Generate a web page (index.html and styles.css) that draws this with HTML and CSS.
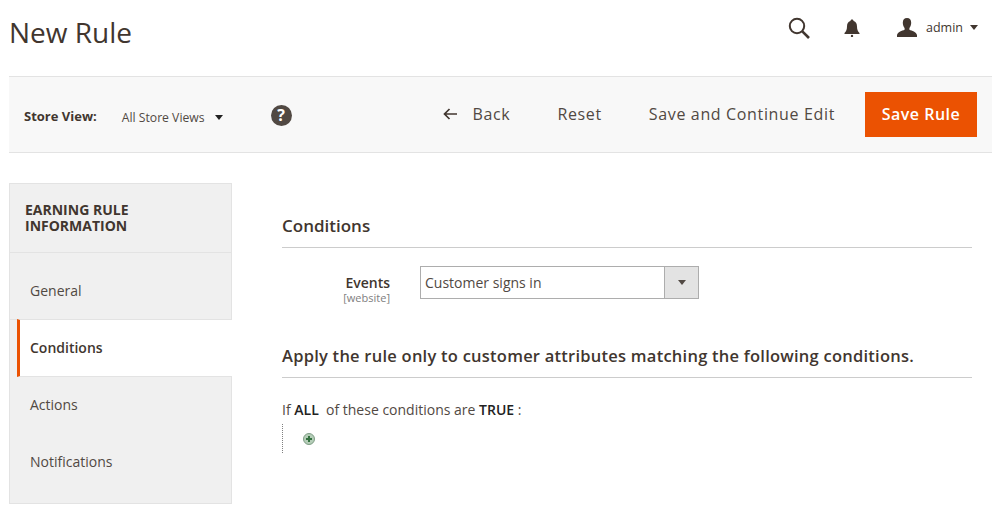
FILE: index.html
```html
<!DOCTYPE html>
<html>
<head>
    <title>New Rule</title>
    <meta name="viewport" content="width=device-width, initial-scale=1.0">
    <link rel="stylesheet" href="styles.css">
</head>
<body>
    <div class="page">
        <header class="top">
            <h1>New Rule</h1>
            <div class="top-actions">
                <svg class="icon-search" width="24" height="24" viewBox="0 0 24 24"><circle cx="10" cy="10" r="7.2" fill="none" stroke="#41362f" stroke-width="2"/><path d="M15.3 15.3L22 22" stroke="#41362f" stroke-width="2.6" fill="none"/></svg>
                <svg class="icon-bell" width="16" height="18" viewBox="0 0 16 18"><path d="M8 0.5c1 0 1.5.7 1.6 1.6C12 2.8 13 4.8 13 7.5c0 3 .8 5 2.500 6.500v1H.5v-1C2.200 12.500 3 10.500 3 7.500c0-2.700 1-4.700 3.400-5.400C6.500 1.200 7 .5 8 .5z" fill="#41362f"/><circle cx="8" cy="17" r="1.200" fill="#41362f"/></svg>
                <svg class="icon-user" width="20" height="20" viewBox="0 0 20 20"><path d="M10 0c2.800 0 4.200 2 4.200 4.800 0 2.200-.8 4-1.800 5.200v1.700c2.500 1.200 7 2 7.600 5.300v2H0v-2c.6-3.300 5.100-4.100 7.600-5.300V10c-1-1.200-1.800-3-1.800-5.200C5.800 2 7.200 0 10 0z" fill="#41362f"/></svg>
                <span class="user-name">admin</span>
                <span class="caret"></span>
            </div>
        </header>

        <div class="toolbar">
            <div class="scope">
                <strong>Store View:</strong>
                <span class="scope-value">All Store Views</span>
                <span class="caret caret-dark"></span>
                <span class="help">?</span>
            </div>
            <div class="buttons">
                <a class="tool-btn back">
                    <svg width="14" height="12" viewBox="0 0 14 12"><path d="M6.500 1L1.500 6l5 5M1.500 6H14" fill="none" stroke="#41362f" stroke-width="1.700"/></svg>
                    Back
                </a>
                <a class="tool-btn">Reset</a>
                <a class="tool-btn">Save and Continue Edit</a>
                <a class="save-btn">Save Rule</a>
            </div>
        </div>

        <div class="main">
            <aside class="side">
                <div class="side-title">EARNING RULE INFORMATION</div>
                <ul class="tabs">
                    <li class="tab tab-general">General</li>
                    <li class="tab tab-active">Conditions</li>
                    <li class="tab">Actions</li>
                    <li class="tab">Notifications</li>
                </ul>
            </aside>

            <section class="content">
                <h2 class="section-title">Conditions</h2>
                <div class="field">
                    <div class="field-label">
                        <label>Events</label>
                        <span>[website]</span>
                    </div>
                    <div class="select">
                        <span class="select-text">Customer signs in</span>
                        <span class="select-arrow"><span class="caret caret-small"></span></span>
                    </div>
                </div>
                <h2 class="section-title rule-title">Apply the rule only to customer attributes matching the following conditions.</h2>
                <p class="rule-line">If <b>ALL</b>&nbsp; of these conditions are <b>TRUE</b> :</p>
                <div class="rule-tree">
                    <svg width="12" height="12" viewBox="0 0 12 12"><circle cx="6" cy="6" r="5.500" fill="#b4cdb7" stroke="#7f9c85"/><path d="M6 3v6M3 6h6" stroke="#33703f" stroke-width="2"/></svg>
                </div>
            </section>
        </div>
    </div>
</body>
</html>
```

FILE: styles.css
```css
* {
    margin: 0;
    padding: 0;
    box-sizing: border-box;
}

body {
    font-family: "Open Sans", Arial, sans-serif;
    font-size: 14px;
    color: #41362f;
    background: #fff;
    height: 519px;
    overflow: hidden;
}

.page {
    width: 983px;
    margin-left: 9px;
}

.top {
    height: 76px;
    display: flex;
    align-items: center;
    justify-content: space-between;
}

.top h1 {
    font-size: 28px;
    font-weight: 400;
    line-height: 38px;
    color: #41362f;
    margin-top: -12px;
}

.top-actions {
    display: flex;
    align-items: center;
    margin-top: -21px;
    padding-right: 14px;
}

.icon-search {
    margin-right: 33px;
    margin-left: -1px;
}

.icon-bell {
    margin-right: 37px;
}

.user-name {
    font-size: 12.500px;
    margin: 0 7px 0 9px;
}

.caret {
    display: inline-block;
    width: 0;
    height: 0;
    border-left: 4.500px solid transparent;
    border-right: 4.500px solid transparent;
    border-top: 5px solid #41362f;
}

.toolbar {
    height: 77px;
    background: #f8f8f8;
    border-top: 1px solid #e3e3e3;
    border-bottom: 1px solid #e3e3e3;
    display: flex;
    align-items: center;
    justify-content: space-between;
    padding: 0 15px;
}

.scope {
    display: flex;
    align-items: center;
    font-size: 13px;
    padding-top: 2px;
}

.scope strong {
    color: #41362f;
    margin-right: 25px;
}

.scope-value {
    font-size: 12.200px;
    color: #514943;
    margin: 4px 10px 0 0;
}

.caret-dark {
    border-top-color: #222;
    margin-top: 3px;
}

.help {
    width: 21px;
    height: 21px;
    border-radius: 50%;
    background: #514943;
    color: #fff;
    font-weight: 700;
    font-size: 16px;
    line-height: 21px;
    text-align: center;
    margin-left: 48px;
    margin-top: -1px;
}

.buttons {
    display: flex;
    align-items: center;
}

.tool-btn {
    font-size: 16px;
    letter-spacing: .65px;
    color: #514943;
    margin: -2px 47px 0 0;
    display: flex;
    align-items: center;
}

.tool-btn:nth-child(3) {
    margin-right: 30px;
}

.back svg {
    margin-right: 15px;
}

.save-btn {
    width: 112px;
    height: 45px;
    background: #eb5202;
    color: #fff;
    font-size: 16px;
    font-weight: 600;
    letter-spacing: .5px;
    line-height: 45px;
    text-align: center;
}

.main {
    display: flex;
    padding-top: 30px;
}

.side {
    width: 223px;
    height: 321px;
    background: #f0f0f0;
    border: 1px solid #e3e3e3;
    flex-shrink: 0;
}

.side-title {
    height: 69px;
    padding: 18px 60px 0 15px;
    font-size: 14px;
    font-weight: 700;
    line-height: 16px;
    color: #41362f;
    border-bottom: 1px solid #e3e3e3;
}

.tabs {
    list-style: none;
}

.tab {
    height: 57px;
    padding: 0 0 2px 20px;
    display: flex;
    align-items: center;
    font-size: 14px;
    color: #514943;
}

.tab-general {
    height: 67px;
    padding-top: 8px;
    padding-bottom: 0;
    border-bottom: 1px solid #e3e3e3;
}

.tab-active {
    height: 58px;
    margin: -1px -1px 0 7px;
    padding: 0 0 2px 10px;
    background: #fff;
    border-left: 3px solid #eb5202;
    border-top: 1px solid #e3e3e3;
    border-bottom: 1px solid #e3e3e3;
    color: #41362f;
    font-weight: 600;
}

.content {
    width: 690px;
    margin-left: 50px;
    padding-top: 31px;
}

.section-title {
    font-size: 17px;
    font-weight: 600;
    line-height: 23px;
    color: #41362f;
    padding-bottom: 10px;
    border-bottom: 1px solid #ccc;
}

.field {
    display: flex;
    margin-top: 18px;
}

.field-label {
    width: 108px;
    text-align: right;
    padding-top: 9px;
    line-height: 16px;
}

.field-label label {
    display: block;
    font-weight: 600;
    color: #41362f;
}

.field-label span {
    display: block;
    font-size: 11px;
    line-height: 14px;
    color: #808080;
}

.select {
    width: 279px;
    height: 33px;
    margin-left: 30px;
    border: 1px solid #adadad;
    display: flex;
    justify-content: space-between;
}

.select-text {
    padding-left: 4px;
    line-height: 31px;
    color: #514943;
}

.select-arrow {
    width: 34px;
    background: #e3e3e3;
    border-left: 1px solid #adadad;
    display: flex;
    align-items: center;
    justify-content: center;
}

.caret-small {
    border-top-color: #514943;
}

.rule-title {
    margin-top: 39px;
    font-size: 16.500px;
    letter-spacing: .24px;
    padding-bottom: 10px;
}

.rule-line {
    margin-top: 22px;
    line-height: 19px;
    color: #514943;
}

.rule-line b {
    font-weight: 600;
    color: #222;
}

.rule-tree {
    height: 29px;
    margin-top: 5px;
    border-left: 1px dotted #808080;
    padding: 9px 0 0 20px;
}

.rule-tree svg {
    display: block;
}
```
